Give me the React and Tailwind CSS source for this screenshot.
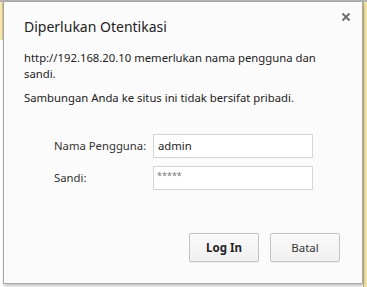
export default function App() {
  return (
    <div className="relative w-[367px] h-[287px] bg-white overflow-hidden" style={{ fontFamily: '"Noto Sans", "Open Sans", sans-serif' }}>
      <div className="absolute left-0 top-0 w-[367px] h-[2px] bg-[#b4b4b4]" />
      <div className="absolute left-0 top-[2px] w-[3px] h-[38px] bg-[#f8e7a8] border-r border-[#d8c88a]" />
      <div className="absolute right-0 top-[2px] w-[4px] h-[285px] bg-[#f8e7a8] border-l border-[#d8c88a]" />
      <div className="absolute left-[3px] top-[1px] w-[360px] h-[283px] bg-[#fbfbfb] border border-[#a8a8a8] shadow-[1px_2px_3px_rgba(0,0,0,0.25)] text-[#222]">
        <button className="absolute right-[9px] top-[8px] w-[14px] h-[14px] flex items-center justify-center">
          <svg width="10" height="10" viewBox="0 0 10 10">
            <path d="M1.5 1.5 L8.5 8.5 M8.5 1.5 L1.5 8.5" stroke="#6e6e6e" strokeWidth="2" />
          </svg>
        </button>
        <div className="pl-[20px] pt-[15px]">
          <div className="text-[14px] leading-[20px] text-[#222]">Diperlukan Otentikasi</div>
          <div className="mt-[13px] text-[11.3px] leading-[16px] w-[300px]">http://192.168.20.10 memerlukan nama pengguna dan sandi.</div>
          <div className="mt-[8px] text-[11.3px] leading-[16px]">Sambungan Anda ke situs ini tidak bersifat pribadi.</div>
          <div className="mt-[28px] ml-[30px] flex flex-col gap-[8px] text-[11.3px]">
            <div className="flex items-center">
              <span className="w-[99px] text-[#333]">Nama Pengguna:</span>
              <div className="w-[160px] h-[24px] border border-[#d5d5d5] bg-white px-[4px] flex items-center text-[#222]">admin</div>
            </div>
            <div className="flex items-center">
              <span className="w-[99px] text-[#333]">Sandi:</span>
              <div className="w-[160px] h-[24px] border border-[#d5d5d5] bg-white px-[3px] pb-[4px] flex items-center text-[#777] text-[9px] tracking-[0px]">*****</div>
            </div>
          </div>
        </div>
        <div className="absolute left-[185px] top-[231px] flex gap-[11px]">
          <button className="w-[70px] h-[29px] border border-[#c4c4c4] rounded-[2px] bg-gradient-to-b from-[#fafafa] to-[#f0f0f0] text-[11.5px] font-bold text-[#222] shadow-[0_1px_0_rgba(0,0,0,0.05)]">Log In</button>
          <button className="w-[70px] h-[29px] border border-[#c4c4c4] rounded-[2px] bg-gradient-to-b from-[#fafafa] to-[#f0f0f0] text-[11.5px] text-[#333] shadow-[0_1px_0_rgba(0,0,0,0.05)]">Batal</button>
        </div>
      </div>
    </div>
  );
}
